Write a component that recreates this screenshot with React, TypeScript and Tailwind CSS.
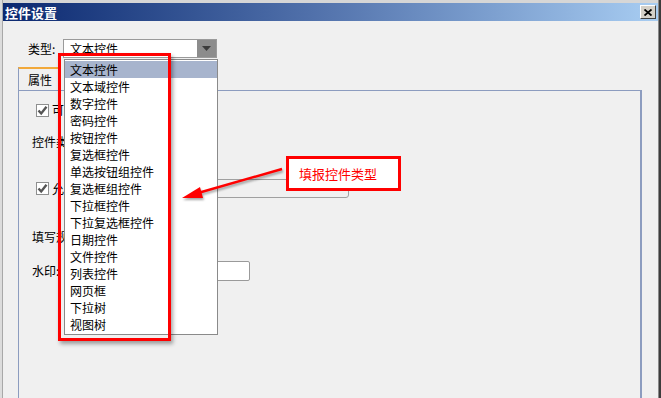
const items = [
	'文本控件',
	'文本域控件',
	'数字控件',
	'密码控件',
	'按钮控件',
	'复选框控件',
	'单选按钮组控件',
	'复选框组控件',
	'下拉框控件',
	'下拉复选框控件',
	'日期控件',
	'文件控件',
	'列表控件',
	'网页框',
	'下拉树',
	'视图树',
]

const font = { fontFamily: '"Noto Sans CJK SC", "Noto Sans", sans-serif' }

const CheckBox = () => (
	<div className="flex h-[13px] w-[13px] items-center justify-center border border-[#8e8f8f] bg-white">
		<svg width="11" height="11" viewBox="0 0 11 11">
			<path d="M1.5 5.5 L4.2 8.5 L9.5 1.8" fill="none" stroke="#555" strokeWidth="2.4" />
		</svg>
	</div>
)

/**
 * Control settings dialog with the type dropdown opened and an annotation.
 */
const App = () => {
	return (
		<div className="relative flex h-[398px] w-[661px] overflow-hidden bg-[#f0f0f0] text-[12px] text-black" style={font}>
			{/* page behind the dialog */}
			<div className="w-[3px] shrink-0 border-r border-[#a8a8a8] bg-[#dcdcdc]" />

			{/* Dialog */}
			<div className="flex min-w-0 flex-1 flex-col border-t-[3px] border-[#d6d6d6]">
				{/* Title bar */}
				<div className="flex h-[18px] shrink-0 items-center justify-between bg-gradient-to-r from-[#0c2870] via-[#5575ae] to-[#a8cdf2] pl-[2px] pr-[2px]">
					<span className="text-[13px] leading-none font-bold text-white">控件设置</span>
					<div className="flex h-[14px] w-[16px] items-center justify-center border border-t-white border-l-white border-r-[#404040] border-b-[#404040] bg-[#d4d0c8]">
						<svg width="8" height="7" viewBox="0 0 8 7">
							<path d="M0.5 0.5 L7.5 6.5 M7.5 0.5 L0.5 6.5" stroke="#000" strokeWidth="1.8" />
						</svg>
					</div>
				</div>

				{/* Body */}
				<div className="flex flex-1 flex-col pl-[15px]">
					{/* Type row */}
					<div className="mt-[18px] flex h-[19px] items-center">
						<span className="ml-[10px] w-[35px]">类型:</span>
						<div className="flex h-[19px] w-[154px] border border-[#9a9a9a] bg-white">
							<span className="flex-1 pl-[6px] leading-[17px]">文本控件</span>
							<div className="flex w-[19px] items-center justify-center bg-[#8c8c8c]">
								<svg width="9" height="5" viewBox="0 0 9 5">
									<path d="M0 0 H9 L4.5 5 Z" fill="#3c3c3c" />
								</svg>
							</div>
						</div>
					</div>

					{/* Tab */}
					<div className="mt-[9px] flex">
						<div className="h-[24px] w-[41px] border-t-2 border-l border-r border-t-[#f2a93b] border-l-[#8c9cbf] border-r-[#8c9cbf] bg-[#f0f0f0] pl-[9px] pt-[3px] leading-[16px]">
							属性
						</div>
					</div>

					{/* Tab panel */}
					<div className="-mt-px flex h-[320px] w-[624px] flex-col border border-[#8c9cbf] border-r-2">
						<div className="mt-[12px] flex h-[14px] items-center gap-[3px] pl-[17px]">
							<CheckBox />
							<span>可见</span>
						</div>

						<div className="mt-[14px] flex h-[22px] items-center pl-[13px]">
							<span className="w-[68px]">控件类型:</span>
							<div className="h-[22px] w-[118px] border border-[#8a8a8a] bg-white" />
						</div>

						<div className="mt-[26px] flex h-[19px] items-center pl-[17px]">
							<CheckBox />
							<span className="ml-[3px] w-[80px]">允许为空</span>
							<div className="h-[19px] w-[217px] rounded-br-[3px] border border-[#a0a0a0] bg-[#f0f0f0]" />
						</div>

						<div className="mt-[32px] flex h-[14px] items-center pl-[13px]">
							<span>填写规则:</span>
						</div>

						<div className="mt-[17px] flex h-[20px] items-center pl-[13px]">
							<span className="w-[86px]">水印:</span>
							<div className="h-[20px] w-[132px] rounded-[2px] border border-[#9a9a9a] bg-white" />
						</div>
					</div>
				</div>
			</div>

			<div className="w-[3px] shrink-0 border-l border-[#8a8a8a] bg-[#3c3c3c]" />

			{/* Opened dropdown list */}
			<div className="absolute left-[64px] top-[59px] flex w-[154px] flex-col border border-[#8a8a8a] bg-white py-px">
				{items.map((item, i) => (
					<div key={item} className={i === 0 ? 'h-[17px] bg-[#a7b4cd] pl-[5px] leading-[17px]' : 'h-[17px] pl-[5px] leading-[17px]'}>
						{item}
					</div>
				))}
			</div>

			{/* Red highlight box */}
			<div className="pointer-events-none absolute left-[58px] top-[53px] h-[288px] w-[113px] border-[3px] border-[#ff0000] shadow-[2px_3px_4px_rgba(0,0,0,0.35)]" />

			{/* Arrow */}
			<svg className="absolute left-[175px] top-[160px] drop-shadow-[1px_2px_1px_rgba(0,0,0,0.35)]" width="120" height="50" viewBox="175 160 120 50">
				<line x1="282" y1="169" x2="198" y2="193" stroke="#ff0000" strokeWidth="2.5" />
				<polygon points="182,198 200,187 203,198" fill="#ff0000" />
			</svg>

			{/* Callout */}
			<div className="absolute left-[286px] top-[156px] flex h-[35px] w-[115px] items-center border-[3px] border-[#ff0000] bg-white pl-[10px] text-[13px] text-[#ff0000]">
				填报控件类型
			</div>
		</div>
	)
}

export default App
